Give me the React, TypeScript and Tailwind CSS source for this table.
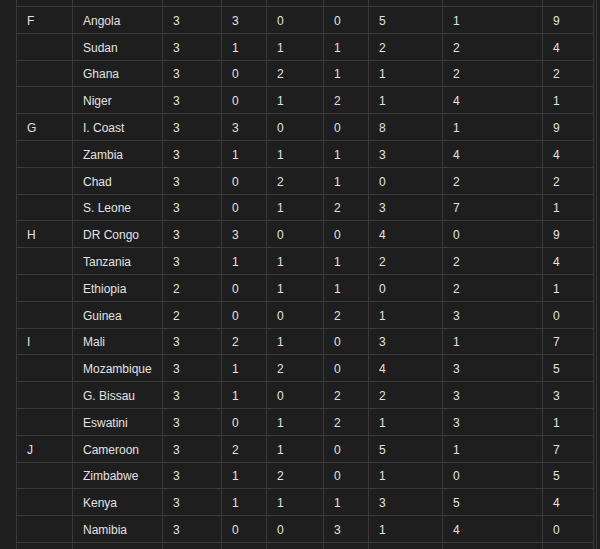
import React from "react";

const rows: (string | number)[][] = [
  ["", "", "", "", "", "", "", "", ""],
  ["F", "Angola", 3, 3, 0, 0, 5, 1, 9],
  ["", "Sudan", 3, 1, 1, 1, 2, 2, 4],
  ["", "Ghana", 3, 0, 2, 1, 1, 2, 2],
  ["", "Niger", 3, 0, 1, 2, 1, 4, 1],
  ["G", "I. Coast", 3, 3, 0, 0, 8, 1, 9],
  ["", "Zambia", 3, 1, 1, 1, 3, 4, 4],
  ["", "Chad", 3, 0, 2, 1, 0, 2, 2],
  ["", "S. Leone", 3, 0, 1, 2, 3, 7, 1],
  ["H", "DR Congo", 3, 3, 0, 0, 4, 0, 9],
  ["", "Tanzania", 3, 1, 1, 1, 2, 2, 4],
  ["", "Ethiopia", 2, 0, 1, 1, 0, 2, 1],
  ["", "Guinea", 2, 0, 0, 2, 1, 3, 0],
  ["I", "Mali", 3, 2, 1, 0, 3, 1, 7],
  ["", "Mozambique", 3, 1, 2, 0, 4, 3, 5],
  ["", "G. Bissau", 3, 1, 0, 2, 2, 3, 3],
  ["", "Eswatini", 3, 0, 1, 2, 1, 3, 1],
  ["J", "Cameroon", 3, 2, 1, 0, 5, 1, 7],
  ["", "Zimbabwe", 3, 1, 2, 0, 1, 0, 5],
  ["", "Kenya", 3, 1, 1, 1, 3, 5, 4],
  ["", "Namibia", 3, 0, 0, 3, 1, 4, 0],
  ["", "", "", "", "", "", "", "", ""],
];

const widths = [56, 90, 59, 45, 57, 45, 74, 100, 51];

export default function App() {
  return (
    <div
      className="h-[549px] w-[600px] overflow-hidden bg-[#1e1e1e]"
      style={{ fontFamily: '"Liberation Sans", Arial, sans-serif' }}
    >
      <div className="w-[597px] border-r border-[#3a3a3a] pl-4 h-[549px] overflow-hidden">
        <table className="mt-[-20.8px] table-fixed border-collapse w-[578px] text-[12px] text-[#e2e2e2]">
          <colgroup>
            {widths.map((w, i) => (
              <col key={i} style={{ width: w }} />
            ))}
          </colgroup>
          <tbody>
            {rows.map((r, i) => (
              <tr key={i} className="h-[26.8px]">
                {r.map((c, j) => (
                  <td
                    key={j}
                    className="border border-[#3a3a3a] pl-[10px] pr-1 pt-[2px] pb-0 align-middle whitespace-nowrap leading-none"
                  >
                    {c}
                  </td>
                ))}
              </tr>
            ))}
          </tbody>
        </table>
      </div>
    </div>
  );
}
